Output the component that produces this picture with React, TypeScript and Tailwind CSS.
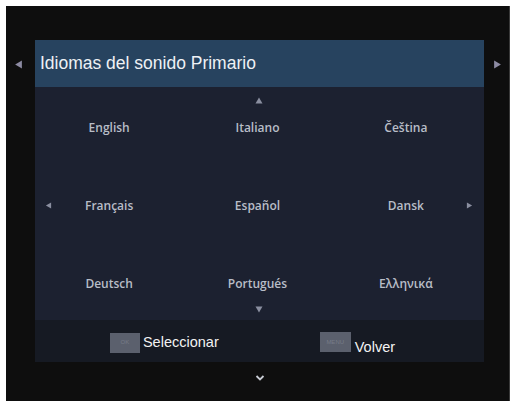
import React from "react";

const TriLeft = ({ c = "#8d8ba3", s = 8 }: { c?: string; s?: number }) => (
  <svg width={s} height={s} viewBox="0 0 8 8"><polygon points="1,4 7,0.5 7,7.5" fill={c} /></svg>
);
const TriRight = ({ c = "#8d8ba3", s = 8 }: { c?: string; s?: number }) => (
  <svg width={s} height={s} viewBox="0 0 8 8"><polygon points="7,4 1,0.5 1,7.5" fill={c} /></svg>
);
const TriUp = ({ c = "#8a8fa0" }: { c?: string }) => (
  <svg width="8" height="7" viewBox="0 0 8 7"><polygon points="4,0.5 7.5,6.5 0.5,6.5" fill={c} /></svg>
);
const TriDown = ({ c = "#8a8fa0" }: { c?: string }) => (
  <svg width="8" height="7" viewBox="0 0 8 7"><polygon points="4,6.5 7.5,0.5 0.5,0.5" fill={c} /></svg>
);

const Lang = ({ t }: { t: string }) => (
  <div className="flex justify-center text-[12px] font-semibold text-[#b8bdc7] leading-[18px]" style={{ fontFamily: '"Open Sans", "DejaVu Sans", sans-serif' }}>
    {t}
  </div>
);

export default function App() {
  return (
    <div className="w-[515px] h-[401px] bg-white pt-[6px] pl-[6px] overflow-hidden">
      <div className="w-[504px] h-[395px] bg-[#0e0e0e] border-r border-[#3a3a3a] flex flex-col" style={{ fontFamily: '"Liberation Sans", Arial, sans-serif' }}>
        <div className="flex pt-[34px]">
          <div className="w-[29px] flex justify-start pl-[8px] pt-[20px]">
            <div className="h-[8px]"><TriLeft s={9} /></div>
          </div>
          <div className="w-[450px] flex flex-col">
            <div className="h-[47px] bg-[#27435f] flex items-center pl-[5px] text-[17.5px] text-[#eef1f5]">
              Idiomas del sonido Primario
            </div>
            <div className="h-[233px] bg-[#1c2130] flex flex-col pt-[10px]">
              <div className="flex justify-center h-[7px]"><TriUp /></div>
              <div className="grid grid-cols-3 pr-[4px] mt-[15px]">
                <Lang t="English" />
                <Lang t="Italiano" />
                <Lang t="Čeština" />
              </div>
              <div className="relative mt-[60px]">
                <div className="grid grid-cols-3 pr-[4px]">
                  <Lang t="Français" />
                  <Lang t="Español" />
                  <Lang t="Dansk" />
                </div>
                <div className="absolute left-[10px] top-[5px]"><TriLeft c="#8a8fa0" s={7} /></div>
                <div className="absolute right-[11px] top-[5px]"><TriRight c="#8a8fa0" s={7} /></div>
              </div>
              <div className="grid grid-cols-3 pr-[4px] mt-[60px]">
                <Lang t="Deutsch" />
                <Lang t="Portugués" />
                <Lang t="Ελληνικά" />
              </div>
              <div className="flex justify-center h-[7px] mt-[13px]"><TriDown /></div>
            </div>
            <div className="h-[42px] bg-[#161a23] flex items-start pt-[12px]">
              <div className="flex items-center ml-[75px]">
                <div className="w-[30px] h-[20px] bg-[#5b606d] flex items-center justify-center text-[6px] text-[#777c88]">OK</div>
                <span className="ml-[3px] text-[14.5px] text-[#f2f2f2]">Seleccionar</span>
              </div>
              <div className="flex items-start ml-[101px]">
                <div className="w-[31px] h-[20px] bg-[#5b606d] flex items-center justify-center text-[6px] text-[#777c88]">MENU</div>
                <span className="ml-[4px] mt-[6px] text-[14.5px] leading-[18px] text-[#f2f2f2]">Volver</span>
              </div>
            </div>
          </div>
          <div className="w-[25px] flex justify-start pl-[9px] pt-[20px]">
            <div className="h-[8px]"><TriRight s={9} /></div>
          </div>
        </div>
        <div className="flex justify-center pt-[12px] ml-[4px]">
          <svg width="10" height="8" viewBox="0 0 10 8">
            <polyline points="1.5,2 5,5.5 8.5,2" fill="none" stroke="#c8ccd4" strokeWidth="1.8" />
          </svg>
        </div>
      </div>
    </div>
  );
}
